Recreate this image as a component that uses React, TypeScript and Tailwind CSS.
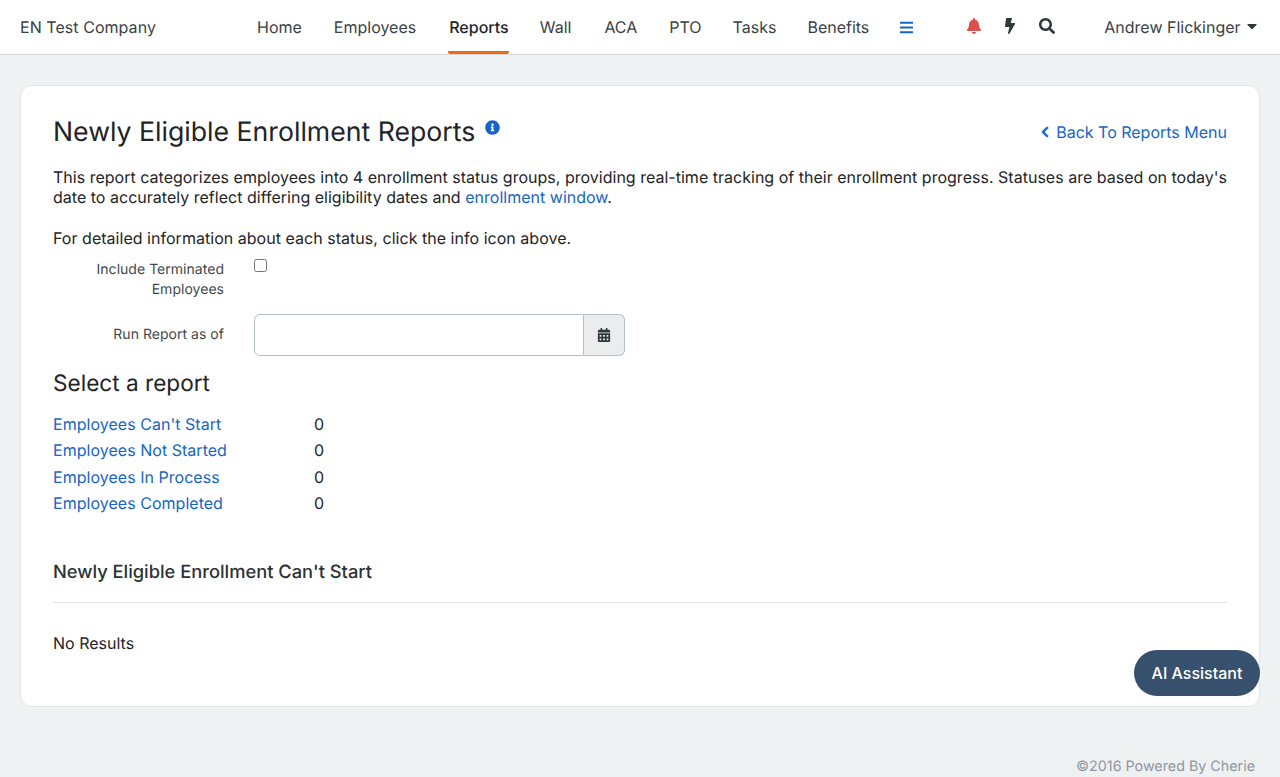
import React from 'react';
import { FaBell, FaBolt, FaSearch, FaBars, FaInfoCircle, FaChevronLeft, FaCalendarAlt, FaCaretDown } from 'react-icons/fa';

const NAV_ITEMS = ['Home', 'Employees', 'Reports', 'Wall', 'ACA', 'PTO', 'Tasks', 'Benefits'];

const REPORTS = ["Employees Can't Start", 'Employees Not Started', 'Employees In Process', 'Employees Completed'];

const navClass = (item: string) => {
  if (item === 'Reports') {
    return '-mr-px flex items-center rounded-[2px] border-b-[3px] border-[#f06a12] pl-px pt-[3px] font-medium text-[#1e2427]';
  }
  if (item === 'ACA' || item === 'PTO') return 'flex translate-x-px items-center';
  if (item === 'Benefits') return 'flex -translate-x-px items-center';
  return 'flex items-center';
};

const App: React.FC = () => {
  return (
    <div className="relative h-[777px] overflow-hidden bg-[#eff2f3] font-['Inter',sans-serif] text-[16px] text-[#1e2427] [text-rendering:geometricPrecision]">
      {/* Top nav */}
      <header className="flex h-[55px] items-center border-b border-[#d3d7d9] bg-white text-[#3a4246]">
        <div className="ml-5 w-[237px] tracking-[0.05px]">EN Test Company</div>
        <nav className="flex h-full items-stretch gap-8">
          {NAV_ITEMS.map(item => (
            <a key={item} className={navClass(item)}>
              {item}
            </a>
          ))}
          <a className="-ml-[3px] flex items-center text-[#1565c8]">
            <FaBars size={15} />
          </a>
        </nav>
        <div className="ml-[52px] flex items-center">
          <FaBell size={16} className="-translate-y-px text-[#dd4f4f]" />
          <FaBolt size={16} className="ml-[20px] -translate-y-px text-[#2f383c]" />
          <FaSearch size={16} className="ml-[21px] -translate-y-px text-[#2f383c]" />
        </div>
        <div className="ml-[49px] flex items-center gap-[3px]">
          <span>Andrew Flickinger</span>
          <FaCaretDown size={16} className="-translate-y-px text-[#2f383c]" />
        </div>
      </header>

      {/* Main card */}
      <main className="mx-5 mt-[30px] h-[622px] rounded-xl border border-[#e1e7ea] bg-white px-8 pt-[29px] tracking-[0.03px]">
        <div className="flex items-start justify-between tracking-normal">
          <div className="flex items-start">
            <h1 className="text-[26.67px] leading-[34px]">Newly Eligible Enrollment Reports</h1>
            <FaInfoCircle size={15} className="ml-[10px] mt-[5px] text-[#1565c8]" />
          </div>
          <a className="mt-[5px] flex items-center gap-[5px] leading-[24px] text-[#1565c8]">
            <FaChevronLeft size={12} className="[stroke-width:30]" />
            Back To Reports Menu
          </a>
        </div>

        <p className="mt-[18px] whitespace-nowrap leading-[20px] tracking-[0.015px]">
          This report categorizes employees into 4 enrollment status groups, providing real-time tracking of their
          enrollment progress. Statuses are based on today's
          <br />
          date to accurately reflect differing eligibility dates and <a className="text-[#1565c8]">enrollment window</a>.
        </p>
        <p className="mt-[21px] leading-[20px]">For detailed information about each status, click the info icon above.</p>

        <div className="mt-[10px] flex">
          <label className="mt-[2px] w-[171px] text-right text-[14px] leading-[20px] text-[#3f474b]">
            Include Terminated Employees
          </label>
          <input type="checkbox" className="ml-[30px] mt-[1px] h-[13px] w-[13px]" />
        </div>

        <div className="mt-[14px] flex items-center">
          <label className="w-[171px] pb-[2px] text-right text-[14px] text-[#3f474b]">Run Report as of</label>
          <div className="ml-[30px] flex h-[42px] w-[371px]">
            <input className="min-w-0 flex-1 rounded-l-md border border-[#b4c0c8] bg-white" />
            <div className="flex w-[41px] items-center justify-center rounded-r-md border border-l-0 border-[#b4c0c8] bg-[#ebeced]">
              <FaCalendarAlt size={14} className="text-[#2f383c]" />
            </div>
          </div>
        </div>

        <h2 className="mt-[14px] text-[22.6px] font-normal leading-[28px] tracking-normal">Select a report</h2>

        <div className="mt-[12.7px]">
          {REPORTS.map(report => (
            <div key={report} className="flex h-[26.4px] items-center">
              <a className="w-[261px] text-[#1565c8]">{report}</a>
              <span>0</span>
            </div>
          ))}
        </div>

        <h3 className="mt-[44px] text-[18.3px] font-medium leading-[24px] tracking-normal text-[#2b3236]">
          Newly Eligible Enrollment Can't Start
        </h3>
        <hr className="mt-[18px] border-[#e4e7e9]" />
        <p className="mt-[30px] leading-[20px] tracking-normal">No Results</p>
      </main>

      {/* Floating chat button */}
      <button className="absolute left-[1134px] top-[650px] h-[46px] w-[126px] rounded-[23px] bg-[#36506e] font-medium text-white">
        AI Assistant
      </button>

      <footer className="absolute bottom-0 left-0 right-0 flex h-5 items-center justify-end bg-[#eef1f2] pr-[25px] text-[14.3px] text-[#8e969f]">
        ©2016 Powered By Cherie
      </footer>
    </div>
  );
};

export default App;
